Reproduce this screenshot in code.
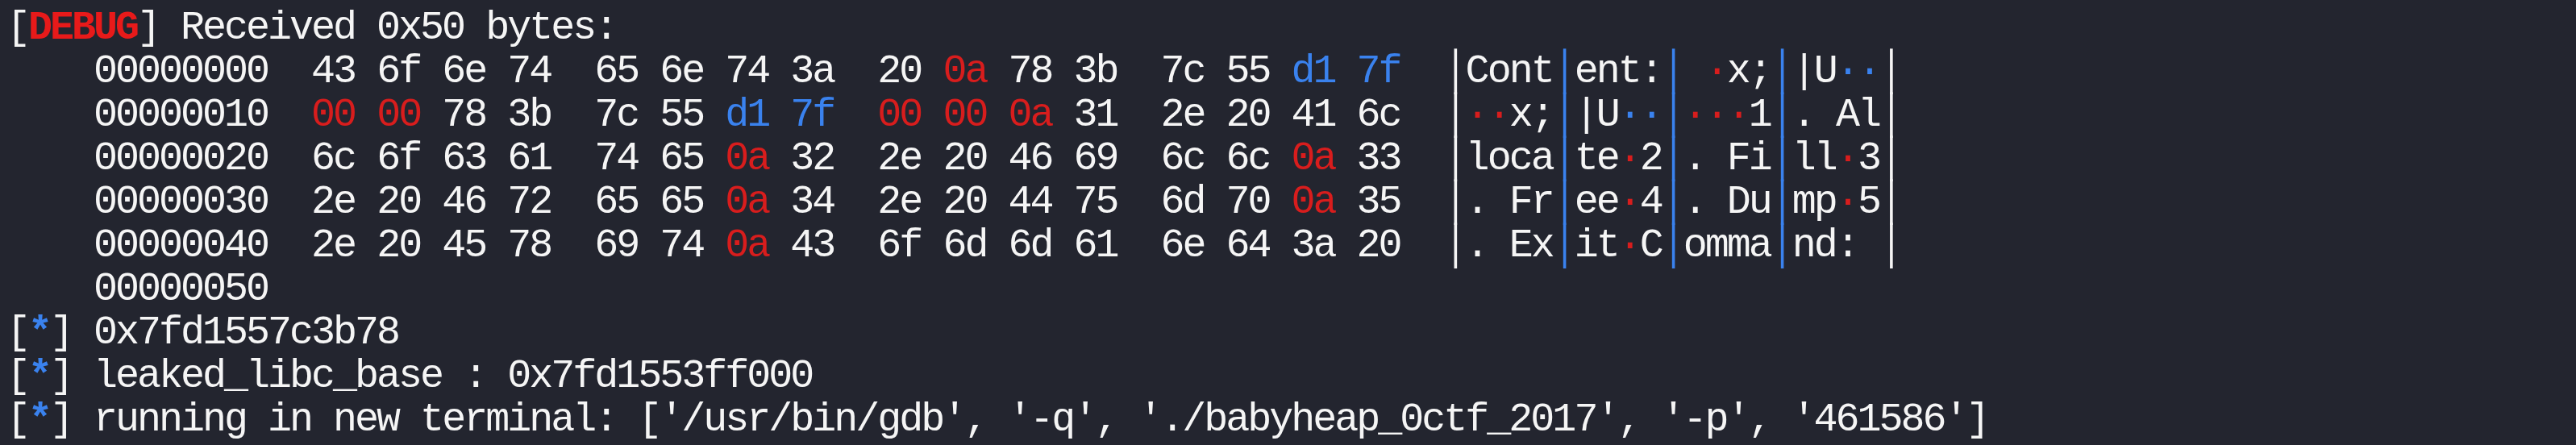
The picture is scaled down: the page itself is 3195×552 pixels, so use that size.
const RED = 'text-[#d81d1d]';
const BLUE = 'text-[#3a82ee]';

const rows: number[][] = [
  [0x43, 0x6f, 0x6e, 0x74, 0x65, 0x6e, 0x74, 0x3a, 0x20, 0x0a, 0x78, 0x3b, 0x7c, 0x55, 0xd1, 0x7f],
  [0x00, 0x00, 0x78, 0x3b, 0x7c, 0x55, 0xd1, 0x7f, 0x00, 0x00, 0x0a, 0x31, 0x2e, 0x20, 0x41, 0x6c],
  [0x6c, 0x6f, 0x63, 0x61, 0x74, 0x65, 0x0a, 0x32, 0x2e, 0x20, 0x46, 0x69, 0x6c, 0x6c, 0x0a, 0x33],
  [0x2e, 0x20, 0x46, 0x72, 0x65, 0x65, 0x0a, 0x34, 0x2e, 0x20, 0x44, 0x75, 0x6d, 0x70, 0x0a, 0x35],
  [0x2e, 0x20, 0x45, 0x78, 0x69, 0x74, 0x0a, 0x43, 0x6f, 0x6d, 0x6d, 0x61, 0x6e, 0x64, 0x3a, 0x20],
];

function byteColor(b: number) {
  if (b === 0x00 || b === 0x0a) return RED;
  if (b >= 0x20 && b < 0x7f) return '';
  return BLUE;
}

function hex(b: number) {
  return b.toString(16).padStart(2, '0');
}

function HexRow({ offset, bytes }: { offset: number; bytes: number[] }) {
  const groups = [0, 1, 2, 3].map((g) => bytes.slice(g * 4, g * 4 + 4));
  return (
    <div>
      {'    '}
      {offset.toString(16).padStart(8, '0')}
      {'  '}
      {groups.map((grp, gi) => (
        <span key={gi}>
          {grp.map((b, i) => (
            <span key={i}>
              <span className={byteColor(b)}>{hex(b)}</span>
              {i < 3 ? ' ' : ''}
            </span>
          ))}
          {'  '}
        </span>
      ))}
      {groups.map((grp, gi) => (
        <span key={'a' + gi}>
          <span className={gi === 0 ? '' : BLUE}>│</span>
          {grp.map((b, i) => {
            const c = byteColor(b);
            return (
              <span key={i} className={c}>
                {c === '' ? String.fromCharCode(b) : '·'}
              </span>
            );
          })}
        </span>
      ))}
      <span>│</span>
    </div>
  );
}

function Info({ children }: { children: React.ReactNode }) {
  return (
    <div>
      [<span className={`${BLUE} font-bold`}>*</span>] {children}
    </div>
  );
}

export default function App() {
  return (
    <div className="w-[3195px] h-[552px] bg-[#23252f] overflow-hidden">
      <div className="pt-[8px] pl-[8px] whitespace-pre text-[50px] tracking-[-3px] leading-[54px] text-[#f5f5f5] font-['Liberation_Mono','DejaVu_Sans_Mono',monospace]">
        <div>
          [<span className="text-[#e81a1a] font-bold">DEBUG</span>] Received 0x50 bytes:
        </div>
        {rows.map((bytes, i) => (
          <HexRow key={i} offset={i * 16} bytes={bytes} />
        ))}
        <div>{'    '}00000050</div>
        <Info>0x7fd1557c3b78</Info>
        <Info>leaked_libc_base : 0x7fd1553ff000</Info>
        <Info>running in new terminal: ['/usr/bin/gdb', '-q', './babyheap_0ctf_2017', '-p', '461586']</Info>
      </div>
    </div>
  );
}
